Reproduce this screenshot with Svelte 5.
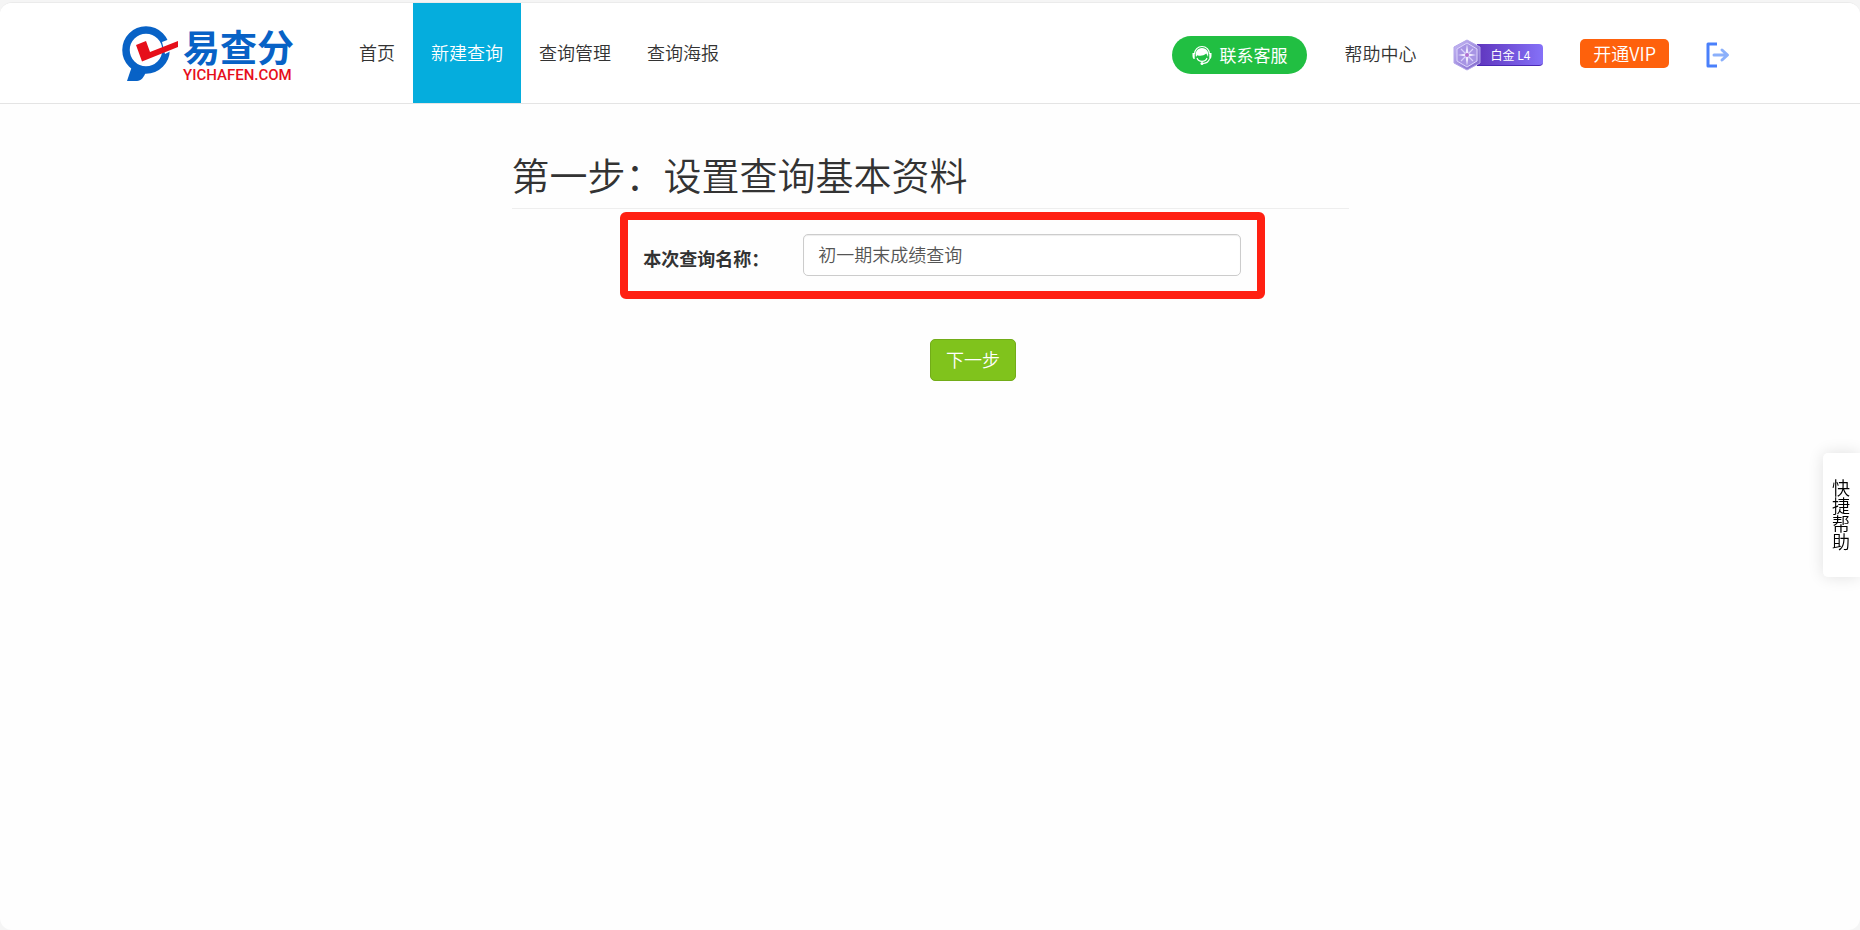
<script>
    const navItems = [
        { name: '首页', path: '#home' },
        { name: '新建查询', path: '#create' },
        { name: '查询管理', path: '#manage' },
        { name: '查询海报', path: '#poster' }
    ];

    let active = $state('#create');
    let queryName = $state('初一期末成绩查询');
</script>

<div class="page">
    <header class="header">
        <a class="logo" href="#home">
            <svg class="logo-mark" viewBox="0 0 57 56" width="57" height="56" aria-hidden="true">
                <path d="M11 38 L8 46 L5 55 L15 55 C19 55 22 51 24 46 Z" fill="#0862c6" />
                <circle cx="24" cy="24" r="20" fill="#fff" stroke="#0862c6" stroke-width="7.500" />
                <path d="M40 16 L58 9 L57 21 L43 28 Z" fill="#fff" />
                <path d="M14 19 L24 15 L28 26 L56 15 L56 21 L20 35.500 Z" fill="#e60f1a" />
            </svg>
            <span class="logo-text">
                <span class="logo-name">易查分</span>
                <span class="logo-domain">YICHAFEN.COM</span>
            </span>
        </a>

        <nav class="nav">
            {#each navItems as item}
                <a
                    class="nav-item"
                    class:active={active === item.path}
                    href={item.path}
                    onclick={() => (active = item.path)}>{item.name}</a>
            {/each}
        </nav>

        <div class="tools">
            <button class="service" type="button">
                <svg viewBox="0 0 20 20" width="20" height="20" aria-hidden="true">
                    <path d="M2.500 9 A7.500 7.500 0 0 1 17.500 9" fill="none" stroke="#fff" stroke-width="1.200" />
                    <path d="M0.500 8 h2.200 v6 h-1 q-1.200 -1 -1.200 -3 z M19.500 8 h-2.200 v6 h1 q1.200 -1 1.200 -3 z" fill="#fff" />
                    <path d="M4 12 C2.800 6.500 5.500 3 10 3 C14.500 3 17.200 6.500 16 12 C15.500 10.800 15 9.800 14.300 8.600 C11.500 11 7.500 11.200 5.400 10.200 C4.700 10.800 4.300 11.400 4 12 Z" fill="#fff" />
                    <path d="M5 13 C6.500 17.500 13.500 17.500 15 13 M17.500 14 C16.500 17 13.500 18.500 10.500 18.500" fill="none" stroke="#fff" stroke-width="1.100" />
                    <circle cx="10" cy="18.500" r="1.500" fill="#fff" />
                </svg>
                联系客服
            </button>
            <a class="help" href="#help">帮助中心</a>
            <a class="level" href="#level">
                <svg class="level-icon" viewBox="0 0 28 32" width="28" height="32" aria-hidden="true">
                    <defs>
                        <linearGradient id="gem" x1="0" y1="0" x2="1" y2="1">
                            <stop offset="0" stop-color="#c9bdf6" />
                            <stop offset="1" stop-color="#7b62c9" />
                        </linearGradient>
                    </defs>
                    <path d="M14 1 L27 8 V24 L14 31 L1 24 V8 Z" fill="url(#gem)" stroke="#b3a4ea" />
                    <path d="M14 4 L24 10 V22 L14 28 L4 22 V10 Z" fill="#a794e4" stroke="#dcd4fb" />
                    <path d="M14 5 L15.500 14.500 L23 16 L15.500 17.500 L14 27 L12.500 17.500 L5 16 L12.500 14.500 Z" fill="#efeaff" />
                    <path d="M8 10 L20 22 M20 10 L8 22" stroke="#d9d0fa" stroke-width="1.200" />
                    <circle cx="14" cy="16" r="2" fill="#b06fd0" />
                </svg>
                <span class="level-name">白金 L4</span>
            </a>
            <a class="vip" href="#vip">开通VIP</a>
            <button class="logout" type="button" aria-label="退出">
                <svg viewBox="0 0 24 26" width="24" height="26" aria-hidden="true">
                    <path d="M11 2 H2 V24 H11" fill="none" stroke="#4a80fb" stroke-width="3" stroke-linejoin="round" />
                    <path d="M8 13 H21 M16 8 L21.500 13 L16 18" fill="none" stroke="#8bb0fb" stroke-width="3" stroke-linecap="round" stroke-linejoin="round" />
                </svg>
            </button>
        </div>
    </header>

    <main class="content">
        <h1>第一步：设置查询基本资料</h1>
        <form onsubmit={(e) => e.preventDefault()}>
            <div class="form-group">
                <label for="query-name">本次查询名称：</label>
                <input id="query-name" type="text" bind:value={queryName} />
            </div>
            <button class="next" type="submit">下一步</button>
        </form>
    </main>

    <button class="quick-help" type="button">快捷帮助</button>
</div>

<style>
    :global(body) {
        background: #f5f5f5;
    }

    .page {
        box-sizing: border-box;
        min-height: calc(100vh - 2px);
        margin-top: 2px;
        border-top: 1px solid #ebebeb;
        border-radius: 12px;
        background: #fefefe;
        color: #333;
        font-family: "Noto Sans CJK SC", sans-serif;
        font-size: 18px;
        font-weight: 350;
        line-height: 26px;
    }

    a {
        color: inherit;
        text-decoration: none;
    }

    button {
        border: 0;
        padding: 0;
        background: none;
        font: inherit;
        cursor: pointer;
    }

    svg {
        display: block;
    }

    .header {
        display: flex;
        align-items: center;
        height: 100px;
        padding: 0 130px 0 122px;
        border-bottom: 1px solid #e4e4e4;
        border-radius: 12px 12px 0 0;
        background: #fff;
    }

    .logo {
        display: flex;
        align-items: center;
        gap: 4px;
        width: 219px;
        padding-top: 2px;
    }

    .logo-text {
        display: flex;
        flex-direction: column;
        padding-top: 8px;
    }

    .logo-name {
        color: #0862c6;
        font-family: Roboto, "Noto Sans CJK SC", sans-serif;
        font-size: 37px;
        font-weight: 700;
        line-height: 34px;
    }

    .logo-domain {
        color: #e60f1a;
        font-family: Roboto, sans-serif;
        font-size: 15px;
        font-weight: 500;
        line-height: 16px;
    }

    .nav {
        display: flex;
        align-self: stretch;
    }

    .nav-item {
        display: flex;
        align-items: center;
        padding: 0 18px 2px;
    }

    .nav-item.active {
        background: #05addd;
        color: #fff;
    }

    .tools {
        display: flex;
        align-items: center;
        gap: 37px;
        margin-left: auto;
        padding-top: 4px;
    }

    .service {
        display: flex;
        align-items: center;
        gap: 7px;
        height: 38px;
        padding: 0 20px;
        border-radius: 19px;
        background: #21bf42;
        color: #fff;
        font-size: 17px;
        font-weight: 400;
    }

    .help,
    .vip {
        margin-bottom: 4px;
    }

    .level {
        display: flex;
        align-items: center;
    }

    .level-name {
        box-sizing: border-box;
        height: 22px;
        margin-left: -4px;
        padding: 0 13px;
        border-bottom: 1px solid #4a28b4;
        border-radius: 0 4px 4px 0;
        background: linear-gradient(90deg, #5f35bd, #8571f8);
        color: #fff;
        font-size: 12px;
        font-weight: 400;
        line-height: 21px;
    }

    .level-icon {
        position: relative;
    }

    .vip {
        padding: 1px 13px 2px;
        border-radius: 5px;
        background: #fe610c;
        color: #fff;
    }

    .content {
        width: 45%;
        margin: 0 auto;
        padding-top: 48px;
    }

    h1 {
        margin: 0 0 3px;
        padding-bottom: 12px;
        border-bottom: 1px solid #eee;
        font-size: 38px;
        font-weight: 350;
        line-height: 44px;
    }

    form {
        display: flex;
        flex-direction: column;
        align-items: flex-start;
    }

    .form-group {
        box-sizing: border-box;
        display: flex;
        align-items: flex-start;
        width: 77%;
        margin-left: 13%;
        padding: 14px 16px 15px 15px;
        border: 8px solid #ff2012;
        border-radius: 6px;
    }

    label {
        width: 160px;
        padding-top: 11px;
        font-weight: 700;
    }

    input {
        box-sizing: border-box;
        flex: 1;
        height: 42px;
        min-width: 0;
        padding: 0 14px 2px;
        border: 1px solid #ccc;
        border-radius: 5px;
        background: #fff;
        box-shadow: inset 0 1px 1px rgba(0, 0, 0, 0.075);
        color: #555;
        font: inherit;
    }

    .next {
        height: 42px;
        margin: 40px 0 0 50%;
        padding: 0 15px 2px;
        border: 1px solid #72ac18;
        border-radius: 5px;
        background: #80c31c;
        color: #fff;
    }

    .quick-help {
        position: fixed;
        top: 453px;
        right: 0;
        padding: 26px 10px 26px 9px;
        border-radius: 5px 0 0 5px;
        background: #fff;
        box-shadow: 0 0 16px rgba(0, 0, 0, 0.12);
        color: #000;
        line-height: 18px;
        writing-mode: vertical-rl;
    }
</style>
